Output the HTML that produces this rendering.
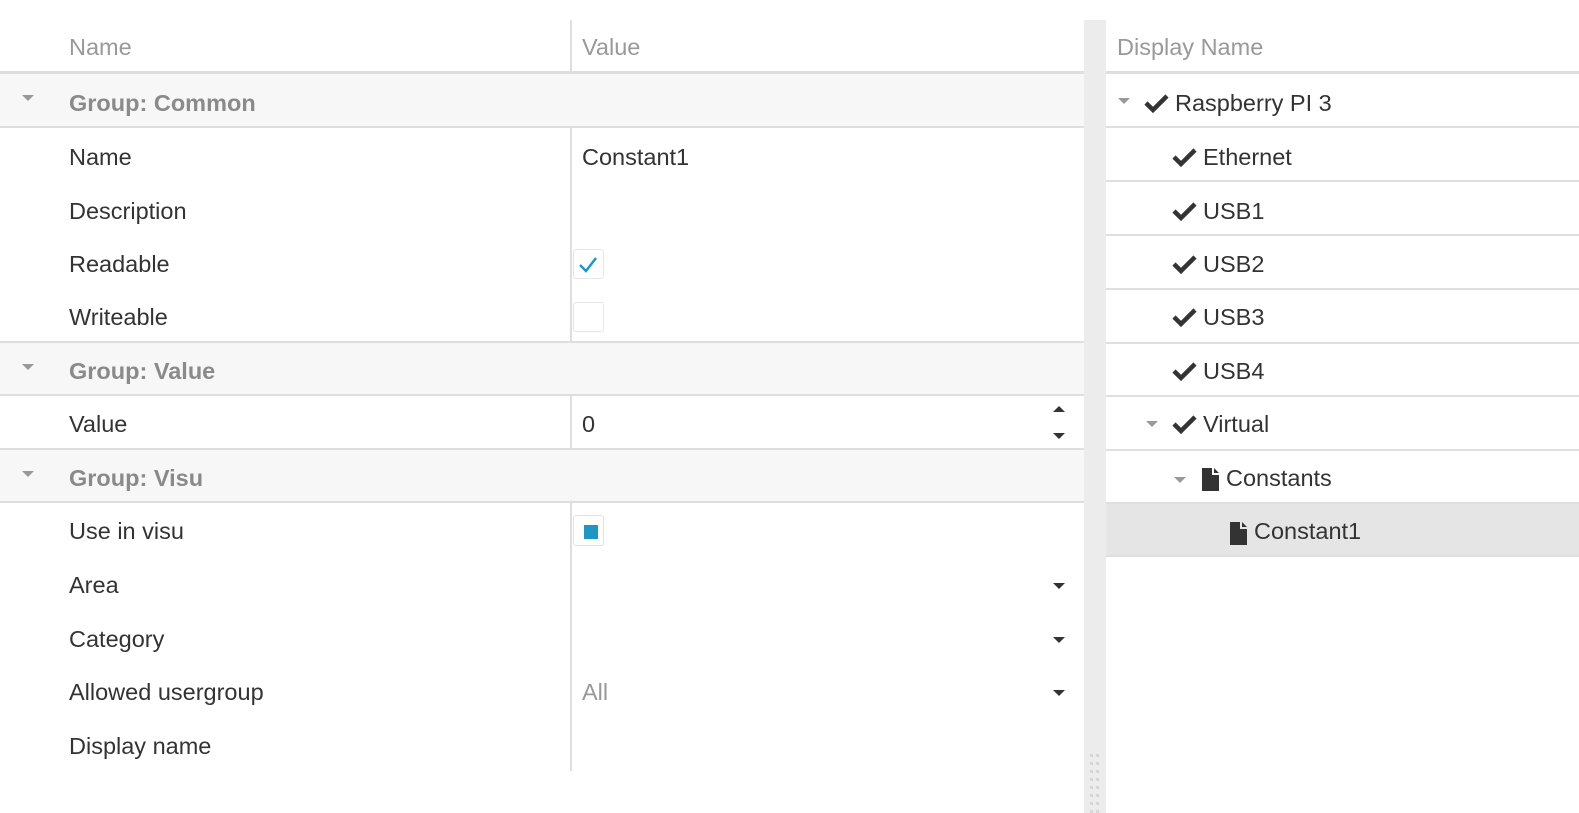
<!DOCTYPE html>
<html><head><meta charset="utf-8"><style>
*{margin:0;padding:0;box-sizing:border-box}
body{width:1579px;height:813px;background:#fff;position:relative;overflow:hidden;font-family:"Segoe UI","Liberation Sans",sans-serif;font-size:23.5px;color:#333}
div{position:absolute}
.t{line-height:28px;white-space:nowrap;margin-top:1px}
.h{color:#999}
.g{color:#8a8a8a;font-weight:bold}
.b{background:#dedede}
.gb{background:#f7f7f7}
.tri{width:0;height:0;border-left:6px solid transparent;border-right:6px solid transparent;border-top:6px solid #999}
.dd{width:0;height:0;border-left:6px solid transparent;border-right:6px solid transparent;border-top:6px solid #333}
.du{width:0;height:0;border-left:6px solid transparent;border-right:6px solid transparent;border-bottom:6px solid #333}
</style></head><body>
<div class="t h" style="left:69px;top:32px">Name</div>
<div class="t h" style="left:582px;top:32px">Value</div>
<div class="b" style="left:0;top:71px;width:1084px;height:3px"></div>
<div class="gb" style="left:0;top:74px;width:1084px;height:52px"></div>
<div class="b" style="left:0;top:126px;width:1084px;height:2px"></div>
<div class="gb" style="left:0;top:343px;width:1084px;height:51px"></div>
<div class="b" style="left:0;top:341px;width:1084px;height:2px"></div>
<div class="b" style="left:0;top:394px;width:1084px;height:2px"></div>
<div class="b" style="left:0;top:448px;width:1084px;height:2px"></div>
<div class="gb" style="left:0;top:450px;width:1084px;height:51px"></div>
<div class="b" style="left:0;top:501px;width:1084px;height:2px"></div>
<div class="b" style="left:570px;top:20px;width:2px;height:51px"></div>
<div class="b" style="left:570px;top:128px;width:2px;height:213px"></div>
<div class="b" style="left:570px;top:396px;width:2px;height:52px"></div>
<div class="b" style="left:570px;top:503px;width:2px;height:268px"></div>
<div class="tri" style="left:22px;top:95px"></div>
<div class="t g" style="left:69px;top:88px">Group: Common</div>
<div class="tri" style="left:22px;top:364px"></div>
<div class="t g" style="left:69px;top:356px">Group: Value</div>
<div class="tri" style="left:22px;top:471px"></div>
<div class="t g" style="left:69px;top:463px">Group: Visu</div>
<div class="t" style="left:69px;top:142px">Name</div>
<div class="t" style="left:582px;top:142px">Constant1</div>
<div class="t" style="left:69px;top:196px">Description</div>
<div class="t" style="left:69px;top:249px">Readable</div>
<div style="left:573px;top:249px;width:31px;height:30px;border:1px solid #e6e6e6;border-radius:3px"></div>
<svg style="position:absolute;left:577px;top:254px" width="22" height="20"><path d="M3 11 L9 17 L19 4" stroke="#1f97c4" stroke-width="2.5" fill="none"/></svg>
<div class="t" style="left:69px;top:302px">Writeable</div>
<div style="left:573px;top:302px;width:31px;height:30px;border:1px solid #e6e6e6;border-radius:3px"></div>
<div class="t" style="left:69px;top:409px">Value</div>
<div class="t" style="left:582px;top:409px">0</div>
<div class="du" style="left:1053px;top:406px"></div>
<div class="dd" style="left:1053px;top:433px"></div>
<div class="t" style="left:69px;top:516px">Use in visu</div>
<div style="left:573px;top:515px;width:31px;height:31px;border:1px solid #e0e0e0;border-radius:3px"></div>
<div style="left:584px;top:525px;width:14px;height:14px;background:#1f97c4"></div>
<div class="t" style="left:69px;top:570px">Area</div>
<div class="dd" style="left:1053px;top:583px"></div>
<div class="t" style="left:69px;top:624px">Category</div>
<div class="dd" style="left:1053px;top:637px"></div>
<div class="t" style="left:69px;top:677px">Allowed usergroup</div>
<div class="t h" style="left:582px;top:677px">All</div>
<div class="dd" style="left:1053px;top:690px"></div>
<div class="t" style="left:69px;top:731px">Display name</div>
<div style="left:1084px;top:20px;width:22px;height:793px;background:#ececec"></div>
<svg style="position:absolute;left:1088px;top:752px" width="14" height="61">
<g fill="#d6d6d6">
<rect x="2" y="2" width="3" height="3"/><rect x="8" y="2" width="3" height="3"/>
<rect x="2" y="10" width="3" height="3"/><rect x="8" y="10" width="3" height="3"/>
<rect x="2" y="18" width="3" height="3"/><rect x="8" y="18" width="3" height="3"/>
<rect x="2" y="26" width="3" height="3"/><rect x="8" y="26" width="3" height="3"/>
<rect x="2" y="34" width="3" height="3"/><rect x="8" y="34" width="3" height="3"/>
<rect x="2" y="42" width="3" height="3"/><rect x="8" y="42" width="3" height="3"/>
<rect x="2" y="50" width="3" height="3"/><rect x="8" y="50" width="3" height="3"/>
<rect x="2" y="58" width="3" height="3"/><rect x="8" y="58" width="3" height="3"/>
</g></svg>
<div class="t h" style="left:1117px;top:32px">Display Name</div>
<div class="b" style="left:1106px;top:71px;width:473px;height:3px"></div>
<div class="b" style="left:1106px;top:126px;width:473px;height:2px"></div>
<div class="b" style="left:1106px;top:180px;width:473px;height:2px"></div>
<div class="b" style="left:1106px;top:234px;width:473px;height:2px"></div>
<div class="b" style="left:1106px;top:288px;width:473px;height:2px"></div>
<div class="b" style="left:1106px;top:342px;width:473px;height:2px"></div>
<div class="b" style="left:1106px;top:395px;width:473px;height:2px"></div>
<div class="b" style="left:1106px;top:449px;width:473px;height:2px"></div>
<div style="left:1106px;top:504px;width:473px;height:51px;background:#e5e5e5"></div>
<div class="b" style="left:1106px;top:502px;width:473px;height:2px"></div>
<div class="b" style="left:1106px;top:555px;width:473px;height:2px"></div>
<div class="tri" style="left:1118px;top:98px"></div>
<svg style="position:absolute;left:1144px;top:92px" width="26" height="22"><path d="M2 11 L9 18 L23 4" stroke="#333" stroke-width="4.5" fill="none"/></svg>
<div class="t" style="left:1175px;top:88px">Raspberry PI 3</div>
<svg style="position:absolute;left:1172px;top:146px" width="26" height="22"><path d="M2 11 L9 18 L23 4" stroke="#333" stroke-width="4.5" fill="none"/></svg>
<div class="t" style="left:1203px;top:142px">Ethernet</div>
<svg style="position:absolute;left:1172px;top:200px" width="26" height="22"><path d="M2 11 L9 18 L23 4" stroke="#333" stroke-width="4.5" fill="none"/></svg>
<div class="t" style="left:1203px;top:196px">USB1</div>
<svg style="position:absolute;left:1172px;top:253px" width="26" height="22"><path d="M2 11 L9 18 L23 4" stroke="#333" stroke-width="4.5" fill="none"/></svg>
<div class="t" style="left:1203px;top:249px">USB2</div>
<svg style="position:absolute;left:1172px;top:306px" width="26" height="22"><path d="M2 11 L9 18 L23 4" stroke="#333" stroke-width="4.5" fill="none"/></svg>
<div class="t" style="left:1203px;top:302px">USB3</div>
<svg style="position:absolute;left:1172px;top:360px" width="26" height="22"><path d="M2 11 L9 18 L23 4" stroke="#333" stroke-width="4.5" fill="none"/></svg>
<div class="t" style="left:1203px;top:356px">USB4</div>
<div class="tri" style="left:1146px;top:421px"></div>
<svg style="position:absolute;left:1172px;top:413px" width="26" height="22"><path d="M2 11 L9 18 L23 4" stroke="#333" stroke-width="4.5" fill="none"/></svg>
<div class="t" style="left:1203px;top:409px">Virtual</div>
<div class="tri" style="left:1174px;top:477px"></div>
<svg style="position:absolute;left:1201px;top:467px" width="19" height="25"><path d="M1 1 H11 V8 H18 V24 H1 Z M13 1 L18 6 H13 Z" fill="#333"/></svg>
<div class="t" style="left:1226px;top:463px">Constants</div>
<svg style="position:absolute;left:1229px;top:521px" width="19" height="25"><path d="M1 1 H11 V8 H18 V24 H1 Z M13 1 L18 6 H13 Z" fill="#333"/></svg>
<div class="t" style="left:1254px;top:516px">Constant1</div>
</body></html>
